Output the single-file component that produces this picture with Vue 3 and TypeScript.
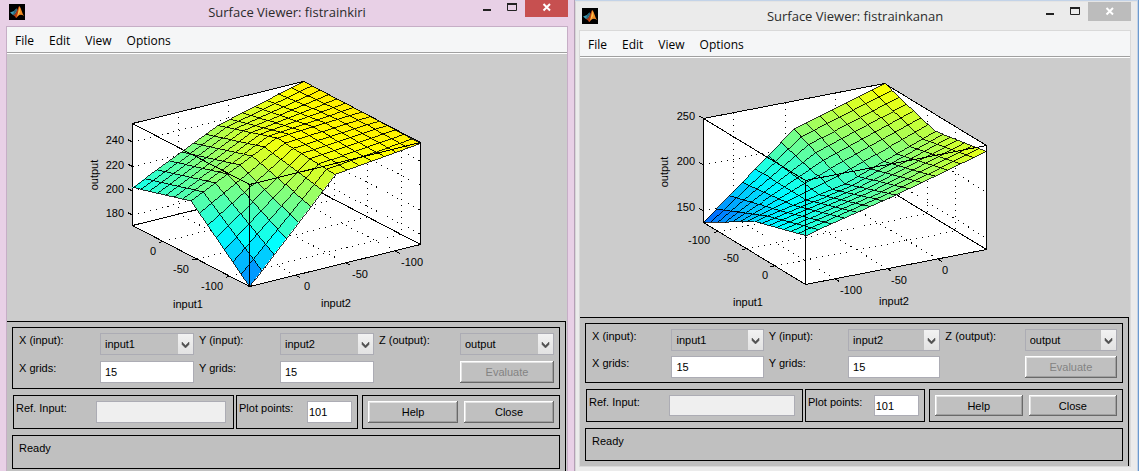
<script setup lang="ts">
type Point = [number, number]

interface Label { text: string; x: number; y: number; anchor: 'start' | 'middle' | 'end' }

interface Plot {
  view: string
  origin: Point
  u: Point
  v: Point
  height: number
  surface: number[][]
  colorBase: number
  colorSlope: number
  uTicks: number[]
  vTicks: number[]
  zTicks: number[]
  labels: Label[]
  outputAt: Point
}

interface Viewer {
  id: string
  title: string
  active: boolean
  plot: Plot
}

const GRID = 14

const viewers: Viewer[] = [
  {
    id: 'kiri',
    title: 'Surface Viewer: fistrainkiri',
    active: true,
    plot: {
      view: '7 54 560 267',
      origin: [132.5, 225.5],
      u: [117, 61],
      v: [171, -42],
      height: 102,
      surface: [[38, 79, 102], [55, 97, 102], [0, 91, 101]],
      colorBase: 0.235,
      colorSlope: 0.004,
      uTicks: [0.263, 0.549, 0.833],
      vTicks: [0.27, 0.563, 0.851],
      zTicks: [10.5, 34.5, 59, 83.5],
      outputAt: [98, 175],
      labels: [
        { text: '240', x: 124, y: 144, anchor: 'end' },
        { text: '220', x: 124, y: 169, anchor: 'end' },
        { text: '200', x: 124, y: 193, anchor: 'end' },
        { text: '180', x: 124, y: 217, anchor: 'end' },
        { text: '0', x: 153, y: 255, anchor: 'middle' },
        { text: '-50', x: 181, y: 273, anchor: 'middle' },
        { text: '-100', x: 212, y: 290, anchor: 'middle' },
        { text: 'input1', x: 188, y: 308, anchor: 'middle' },
        { text: '0', x: 307, y: 290, anchor: 'middle' },
        { text: '-50', x: 360, y: 278, anchor: 'middle' },
        { text: '-100', x: 412, y: 266, anchor: 'middle' },
        { text: 'input2', x: 336, y: 307, anchor: 'middle' },
      ],
    },
  },
  {
    id: 'kanan',
    title: 'Surface Viewer: fistrainkanan',
    active: false,
    plot: {
      view: '580 58 550 259',
      origin: [703.5, 222.5],
      u: [102, 62],
      v: [181, -35],
      height: 104,
      surface: [[0, 76, 104], [32, 52, 87], [49, 72, 98]],
      colorBase: 0.205,
      colorSlope: 0.0041,
      uTicks: [0.145, 0.423, 0.7],
      vTicks: [0.163, 0.452, 0.73],
      zTicks: [11.5, 57.5, 104],
      outputAt: [668, 172],
      labels: [
        { text: '250', x: 695, y: 120, anchor: 'end' },
        { text: '200', x: 695, y: 165, anchor: 'end' },
        { text: '150', x: 695, y: 211, anchor: 'end' },
        { text: '-100', x: 699, y: 244, anchor: 'middle' },
        { text: '-50', x: 731, y: 262, anchor: 'middle' },
        { text: '0', x: 765, y: 279, anchor: 'middle' },
        { text: 'input1', x: 748, y: 306, anchor: 'middle' },
        { text: '-100', x: 851, y: 294, anchor: 'middle' },
        { text: '-50', x: 899, y: 284, anchor: 'middle' },
        { text: '0', x: 945, y: 274, anchor: 'middle' },
        { text: 'input2', x: 894, y: 305, anchor: 'middle' },
      ],
    },
  },
]

function project(p: Plot, u: number, v: number, h: number): Point {
  return [
    p.origin[0] + u * p.u[0] + v * p.v[0],
    p.origin[1] + u * p.u[1] + v * p.v[1] - h,
  ]
}

// Piecewise bilinear height over a 3x3 grid of control values.
function heightAt(p: Plot, i: number, j: number): number {
  const half = GRID / 2
  const a = i < half ? 0 : 1
  const b = j < half ? 0 : 1
  const s = (i - a * half) / half
  const t = (j - b * half) / half
  const g = p.surface
  return (1 - s) * ((1 - t) * g[a][b] + t * g[a][b + 1]) + s * ((1 - t) * g[a + 1][b] + t * g[a + 1][b + 1])
}

function jet(t: number): string {
  const ramp = (c: number) => Math.round(255 * Math.min(1, Math.max(0, 1.5 - Math.abs(4 * t - c))))
  return `rgb(${ramp(3)},${ramp(2)},${ramp(1)})`
}

function path(points: Point[]): string {
  return 'M' + points.map(([x, y]) => `${x.toFixed(1)} ${y.toFixed(1)}`).join('L')
}

function drawPlot(p: Plot) {
  const at = (u: number, v: number, h: number) => project(p, u, v, h)
  const H = p.height
  const hull = path([at(0, 0, 0), at(0, 0, H), at(0, 1, H), at(1, 1, H), at(1, 1, 0), at(1, 0, 0)]) + 'Z'
  const back = path([at(0, 0, 0), at(0, 1, 0), at(1, 1, 0)]) + path([at(0, 1, 0), at(0, 1, H)])
  const front = path([at(0, 0, H), at(1, 0, H), at(1, 1, H)]) + path([at(1, 0, H), at(1, 0, 0)])

  const dotted = [
    ...p.uTicks.map(u => path([at(u, 0, 0), at(u, 1, 0), at(u, 1, H)])),
    ...p.vTicks.map(v => path([at(1, v, 0), at(0, v, 0), at(0, v, H)])),
    ...p.zTicks.map(z => path([at(0, 0, z), at(0, 1, z), at(1, 1, z)])),
  ].join('')

  const ticks = [
    ...p.uTicks.map(u => path([at(u, 0, 0), at(u, -0.025, 0)])),
    ...p.vTicks.map(v => path([at(1, v, 0), at(1.04, v, 0)])),
    ...p.zTicks.map(z => path([at(0, 0, z), at(-0.04, 0, z)])),
  ].join('')

  const faces: { d: string; fill: string; depth: number }[] = []
  for (let i = 0; i < GRID; i++) {
    for (let j = 0; j < GRID; j++) {
      const corners: Point[] = [[i, j], [i + 1, j], [i + 1, j + 1], [i, j + 1]]
      const heights = corners.map(([a, b]) => heightAt(p, a, b))
      const mean = heights.reduce((sum, h) => sum + h, 0) / 4
      faces.push({
        d: path(corners.map(([a, b], k) => at(a / GRID, b / GRID, heights[k]))) + 'Z',
        fill: jet(p.colorBase + p.colorSlope * mean),
        depth: i - j,
      })
    }
  }
  faces.sort((a, b) => a.depth - b.depth)
  return { hull, back, front, dotted, ticks, faces }
}

const windows = viewers.map(viewer => ({ ...viewer, art: drawPlot(viewer.plot) }))
const menus = ['File', 'Edit', 'View', 'Options']
const axes = [
  { key: 'x', label: 'X (input):', value: 'input1', grid: 'X grids:' },
  { key: 'y', label: 'Y (input):', value: 'input2', grid: 'Y grids:' },
  { key: 'z', label: 'Z (output):', value: 'output', grid: '' },
]
</script>

<template>
  <main class="desktop">
    <section v-for="w in windows" :key="w.id" class="window" :class="w.active ? 'active' : 'inactive'">
      <header class="titlebar">
        <svg class="logo" viewBox="0 0 16 16" aria-hidden="true">
          <rect width="16" height="16" fill="#000" />
          <path d="M1 8.5L5 7L7.5 4.5L8.5 6L6 10.5L4 11Z" fill="#3f9db5" />
          <path d="M5 7L7.5 4.5L8.3 5.5L5.5 10L4 11Z" fill="#2c6478" />
          <path d="M4 11L6 10.5Q8 7 9.5 3Q10 1.5 10.8 3L12 7L10 9Q8.5 14 7 14Q6 12 4 11Z" fill="#b33a12" />
          <path d="M10.2 2Q11.5 3 12.7 7T15 12Q12.5 10 10.5 11T7 14Q9 10 10.2 2Z" fill="#f08a24" />
          <path d="M10.3 3L10.8 8L8.5 12Q9.7 8 10.3 3Z" fill="#ffd75a" />
        </svg>
        <h1>{{ w.title }}</h1>
        <div class="window-buttons">
          <button type="button" aria-label="Minimize"><svg viewBox="0 0 25 19"><path d="M8 12h8" stroke="#222" stroke-width="2" /></svg></button>
          <button type="button" aria-label="Maximize"><svg viewBox="0 0 25 19"><path d="M7 6h10" stroke="#222" stroke-width="2" /><path d="M7.500 6v6.500h9V6" fill="none" stroke="#222" /></svg></button>
          <button type="button" class="close" aria-label="Close window"><svg viewBox="0 0 43 19"><path d="M18.500 6l6.500 6.500M25 6l-6.500 6.500" stroke="#fff" stroke-width="2" /></svg></button>
        </div>
      </header>

      <div class="client">
        <nav class="menubar">
          <button v-for="m in menus" :key="m" type="button">{{ m }}</button>
        </nav>

        <svg class="plot" :viewBox="w.plot.view" role="img" aria-label="Surface plot">
          <g shape-rendering="crispEdges" fill="none" stroke="#000">
            <path :d="w.art.hull" fill="#fff" />
            <path :d="w.art.dotted" stroke-dasharray="1 5" />
            <path :d="w.art.back" />
            <path :d="w.art.ticks" />
            <path v-for="(f, k) in w.art.faces" :key="k" :d="f.d" :fill="f.fill" stroke-width="0.8" />
            <path :d="w.art.front" />
          </g>
          <text v-for="(l, k) in w.plot.labels" :key="k" :x="l.x" :y="l.y" :text-anchor="l.anchor">{{ l.text }}</text>
          <text :transform="`translate(${w.plot.outputAt[0]} ${w.plot.outputAt[1]}) rotate(-90)`" text-anchor="middle">output</text>
        </svg>

        <form class="panel" @submit.prevent>
          <div class="box axes">
            <template v-for="a in axes" :key="a.key">
              <label :for="`${w.id}-${a.key}`">{{ a.label }}</label>
              <span class="picker">
                <select :id="`${w.id}-${a.key}`"><option>{{ a.value }}</option></select>
                <svg viewBox="0 0 15 20" aria-hidden="true"><path d="M4 8l3.500 3.500L11 8v2.500L7.500 14L4 10.500Z" fill="#505050" stroke="#505050" stroke-width="0.5" /></svg>
              </span>
            </template>
            <template v-for="a in axes" :key="a.key + 'grid'">
              <template v-if="a.grid">
                <label :for="`${w.id}-${a.key}-grid`">{{ a.grid }}</label>
                <input :id="`${w.id}-${a.key}-grid`" type="text" value="15">
              </template>
              <button v-else type="button" class="push evaluate" disabled>Evaluate</button>
            </template>
          </div>

          <div class="row">
            <div class="box ref">
              <label :for="`${w.id}-ref`">Ref. Input:</label>
              <input :id="`${w.id}-ref`" type="text" disabled>
            </div>
            <div class="box points">
              <label :for="`${w.id}-points`">Plot points:</label>
              <input :id="`${w.id}-points`" type="text" value="101">
            </div>
            <div class="box actions">
              <button type="button" class="push">Help</button>
              <button type="button" class="push">Close</button>
            </div>
          </div>

          <div class="box status" role="status">Ready</div>
        </form>
      </div>
    </section>
  </main>
</template>

<style>
body {
  margin: 0;
}
</style>

<style scoped>
* {
  box-sizing: border-box;
}

.desktop {
  display: grid;
  grid-template-columns: 575fr 562fr;
  min-height: 100vh;
  padding-right: 2px;
  background: linear-gradient(to left, #6c9ace 1px, #c3d3e8 1px);
  font: 11px/14px "Liberation Sans", Arial, sans-serif;
  color: #000;
}

button,
input,
select {
  margin: 0;
  border: 0;
  border-radius: 0;
  font: inherit;
  color: inherit;
}

.window {
  display: flex;
  flex-direction: column;
  min-width: 0;
  border-top: 1px solid #e4e4e4;
}

.active {
  --frame: #e8d0e6;
  --line: #c6aec6;
  --close: #c75050;
  --gap: 6px;
  --field: 22px;
  margin-top: -3px;
  padding: 0 6px;
  border-right: 1px solid #b49fb5;
  background: var(--frame);
}

.inactive {
  --frame: #ebebeb;
  --line: #d9d9d9;
  --close: #bcbcbc;
  --gap: 5px;
  --field: 21px;
  margin-top: 1px;
  padding: 0 6px 0 3px;
  border-left: 1px solid #d6d6d6;
  background: var(--frame);
}

.titlebar {
  display: grid;
  grid-template-columns: 1fr auto 1fr;
  height: 28px;
}

.logo {
  width: 16px;
  height: 16px;
  margin: 6px 0 0 3px;
}

h1 {
  margin: 4px 0 0;
  font: 13px/20px "Open Sans", "Noto Sans", sans-serif;
  color: #2b2b2b;
  white-space: nowrap;
}

.window-buttons {
  display: flex;
  justify-content: flex-end;
  height: 19px;
}

.window-buttons button {
  width: 25px;
  padding: 0;
  background: none;
}

.window-buttons .close {
  width: 43px;
  background: var(--close);
}

.window-buttons svg {
  display: block;
  width: 100%;
  height: 19px;
}

.client {
  display: flex;
  flex-direction: column;
  border: 1px solid var(--line);
  background: #ccc;
}

.active .client {
  flex: 1;
  border-bottom: 0;
}

.menubar {
  display: flex;
  gap: 15px;
  height: 27px;
  padding: 0 8px;
  border-bottom: 1px solid #fff;
  background: linear-gradient(to top, #a0a0a0 1px, #f5f6f7 1px);
}

.menubar button {
  padding: 0;
  background: none;
  font: 12px/25px "Open Sans", "Noto Sans", sans-serif;
}

.plot {
  display: block;
  width: 100%;
}

.plot text {
  font-size: 11px;
}

.panel {
  display: flex;
  flex: 1;
  flex-direction: column;
  gap: 6px;
  margin-right: 1px;
  padding: 5px 5px 0;
  border-top: 1px solid #000;
  border-right: 1px solid #000;
  background: #c0c0c0;
}

.inactive .panel {
  padding-bottom: 5px;
}

.box {
  border: 1px solid #000;
}

label {
  white-space: nowrap;
}

.axes {
  display: grid;
  grid-template-columns: 81fr 94fr 86fr 94fr 86fr 94fr;
  gap: var(--gap) 0;
  padding: 5px 5px 5px 6px;
}

.inactive .axes {
  padding-bottom: 4px;
}

.axes label {
  min-width: 0;
}

.axes label:not(:nth-child(6n + 1)) {
  padding-left: 5px;
}

.evaluate {
  grid-column: 6;
}

input[type="text"] {
  width: 100%;
  min-width: 0;
  height: 22px;
  padding: 0 4px;
  border: 1px solid #acacb4;
  background: #fff;
}

input[type="text"]:disabled {
  background: #efefef;
}

.picker {
  position: relative;
  display: block;
  height: 22px;
}

select {
  width: 100%;
  height: 22px;
  padding: 0 16px 0 4px;
  border: 1px solid #acacb4;
  background: #c0c0c0;
  appearance: none;
}

.picker svg {
  position: absolute;
  top: 1px;
  right: 1px;
  width: 15px;
  height: 20px;
  background: linear-gradient(#f2f2f2, #e2e2e2);
  pointer-events: none;
}

.push {
  height: 22px;
  padding: 0;
  background: #c0c0c0;
  box-shadow: inset -1px -1px #696969, inset 1px 1px #fff, inset -2px -2px #a0a0a0, inset 2px 2px #e3e3e3;
}

.push:disabled {
  color: #838383;
}

.row {
  display: grid;
  grid-template-columns: 221fr 2fr 122fr 4fr 198fr;
  margin-left: 1px;
}

.row .box {
  display: flex;
  padding: 5px;
}

.row input[type="text"],
.row .push {
  height: var(--field);
}

.row .ref {
  padding: 5px 7px 5px 2px;
}

.ref label {
  flex: 0 0 80px;
}

.ref input {
  flex: 1;
}

.row .points {
  grid-column: 3;
  padding-left: 2px;
}

.points label {
  flex: 68;
}

.row .points input {
  flex: 0 0 45px;
  padding: 0 1px;
}

.row .actions {
  grid-column: 5;
  gap: 6px;
}

.actions .push {
  flex: 1;
}

.status {
  height: calc(var(--field) + 12px);
  padding: 5px 6px;
}
</style>
